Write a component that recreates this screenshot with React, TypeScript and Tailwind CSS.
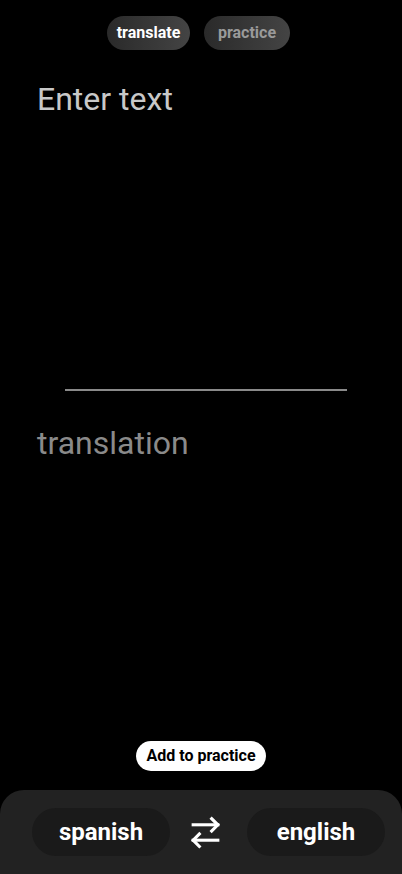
import React from "react";

export default function App() {
  return (
    <div className="w-[402px] h-[874px] bg-black flex flex-col overflow-hidden" style={{ fontFamily: "Roboto, 'Noto Sans', sans-serif" }}>
      <div className="flex justify-center gap-[14px] pt-[16px] pr-[5px]">
        <div className="h-[34px] w-[83px] rounded-full bg-gradient-to-r from-[#2a2a2a] to-[#444444] flex items-center justify-center text-white font-bold text-[16px]">translate</div>
        <div className="h-[34px] w-[86px] rounded-full bg-gradient-to-r from-[#2a2a2a] to-[#444444] flex items-center justify-center text-[#9a9a9a] font-bold text-[16px]">practice</div>
      </div>
      <div className="pl-[37px] pt-[30px] text-[32px] leading-[38px] text-[#c8c8c8]">Enter text</div>
      <div className="h-[271px]" />
      <div className="ml-[65px] mr-[55px] h-[2px] bg-[#8a8a8a]" />
      <div className="pl-[37px] pt-[33px] text-[32px] leading-[38px] text-[#8a8a8a]">translation</div>
      <div className="flex-1" />
      <div className="flex justify-center pb-[19px]">
        <div className="h-[30px] w-[130px] rounded-full bg-white flex items-center justify-center text-black font-bold text-[16px]">Add to practice</div>
      </div>
      <div className="h-[84px] bg-[#222222] rounded-t-[24px] flex items-center pl-[32px]">
        <div className="h-[48px] w-[138px] rounded-full bg-[#1a1a1a] flex items-center justify-center text-white font-bold text-[24px]">spanish</div>
        <svg className="ml-[17px]" width="37" height="37" viewBox="0 0 24 24" fill="none" stroke="white" strokeWidth="2" strokeLinecap="square" strokeLinejoin="miter">
          <path d="m16 3 4 4-4 4" />
          <path d="M20 7H4" />
          <path d="m8 21-4-4 4-4" />
          <path d="M4 17h16" />
        </svg>
        <div className="ml-[23px] h-[48px] w-[138px] rounded-full bg-[#1a1a1a] flex items-center justify-center text-white font-bold text-[24px]">english</div>
      </div>
    </div>
  );
}
